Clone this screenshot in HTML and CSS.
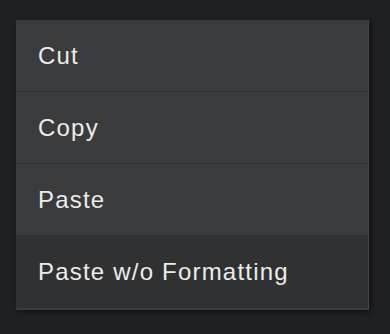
FILE: index.html
```html
<!DOCTYPE html>
<html lang="en">
<head>
    <meta charset="UTF-8">
    <meta name="viewport" content="width=device-width, initial-scale=1.0">
    <title>Context Menu</title>
    <link rel="stylesheet" href="styles.css">
</head>
<body>
    <ul class="menu">
        <li class="menu-item">Cut</li>
        <li class="menu-item">Copy</li>
        <li class="menu-item">Paste</li>
        <li class="menu-item active">Paste w/o Formatting</li>
    </ul>
</body>
</html>
```

FILE: styles.css
```css
* {
    margin: 0;
    padding: 0;
    box-sizing: border-box;
}

body {
    font-family: "Liberation Sans", Arial, sans-serif;
    background: #1f2022;
    padding: 20px 0 0 16px;
    height: 334px;
}

.menu {
    list-style: none;
    width: 353px;
    background: #3a3b3d;
    padding-bottom: 2px;
    box-shadow: 2px 2px 6px rgba(0, 0, 0, 0.45);
    border-right: 1px solid #434447;
}

.menu-item {
    height: 72px;
    display: flex;
    align-items: center;
    padding-left: 22px;
    font-size: 24px;
    letter-spacing: 1.2px;
    color: #ececec;
    background: #3a3b3d;
    border-bottom: 1px solid #303133;
}

.menu-item.active {
    background: #303133;
    border-bottom: none;
}
```
